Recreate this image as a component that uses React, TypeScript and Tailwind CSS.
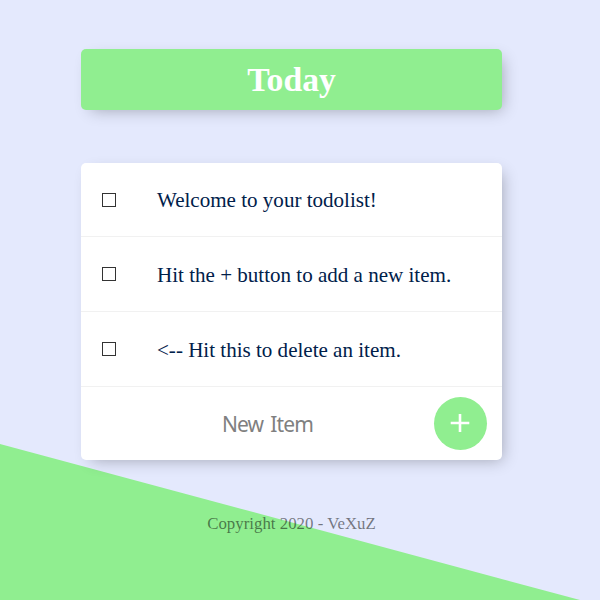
import React from "react";

const items = [
  "Welcome to your todolist!",
  "Hit the + button to add a new item.",
  "<-- Hit this to delete an item.",
];

export default function App() {
  return (
    <div className="relative h-[600px] w-[600px] overflow-hidden bg-[#e4e9fd] font-['Liberation_Serif',serif]">
      <svg className="absolute inset-0" width="600" height="600" viewBox="0 0 600 600">
        <polygon points="0,444 0,600 580,600" fill="#90ee90" />
      </svg>
      <main className="relative flex flex-col pl-[81px] pt-[49px]">
        <header className="flex h-[60.7px] w-[421px] items-center justify-center rounded-[5px] bg-[#90ee90] shadow-[5px_5px_15px_-5px_rgba(0,0,0,0.3)]">
          <h1 className="pt-[2px] text-[33.7px] font-bold leading-[34px] text-white">Today</h1>
        </header>
        <section className="mt-[53px] flex h-[297.6px] w-[421px] flex-col rounded-[5px] bg-white shadow-[5px_5px_15px_-5px_rgba(0,0,0,0.3)]">
          {items.map((text) => (
            <label key={text} className="flex h-[75px] shrink-0 items-center border-b border-[#f1f1f1] pl-[21px] first:h-[74px]">
              <input type="checkbox" className="mt-[1px] h-[14px] w-[14px] appearance-none border border-[#333] bg-white" />
              <span className="ml-[41px] pt-[3px] text-[21.06px] leading-[21px] text-[#00204a]">{text}</span>
            </label>
          ))}
          <form className="flex h-[73px] items-center">
            <input placeholder="New Item" className="ml-[20px] w-[333px] pt-[3px] text-center font-['Noto_Sans',sans-serif] text-[21px] tracking-[-0.85px] [word-spacing:2.5px] outline-none placeholder:text-[#808080]" />
            <button type="button" aria-label="Add" className="mt-px flex h-[52.6px] w-[52.6px] items-center justify-center rounded-full bg-[#90ee90] text-white">
              <svg width="20" height="20" viewBox="0 0 20 20" className="mr-[1px] mb-[1px]" stroke="currentColor" strokeWidth="2.6"><path d="M.7 10h18.6M10 1v18" /></svg>
            </button>
          </form>
        </section>
        <footer className="mt-[55px] w-[421px] text-center text-[16.85px] leading-[18px] text-black/50">Copyright 2020 - VeXuZ</footer>
      </main>
    </div>
  );
}
